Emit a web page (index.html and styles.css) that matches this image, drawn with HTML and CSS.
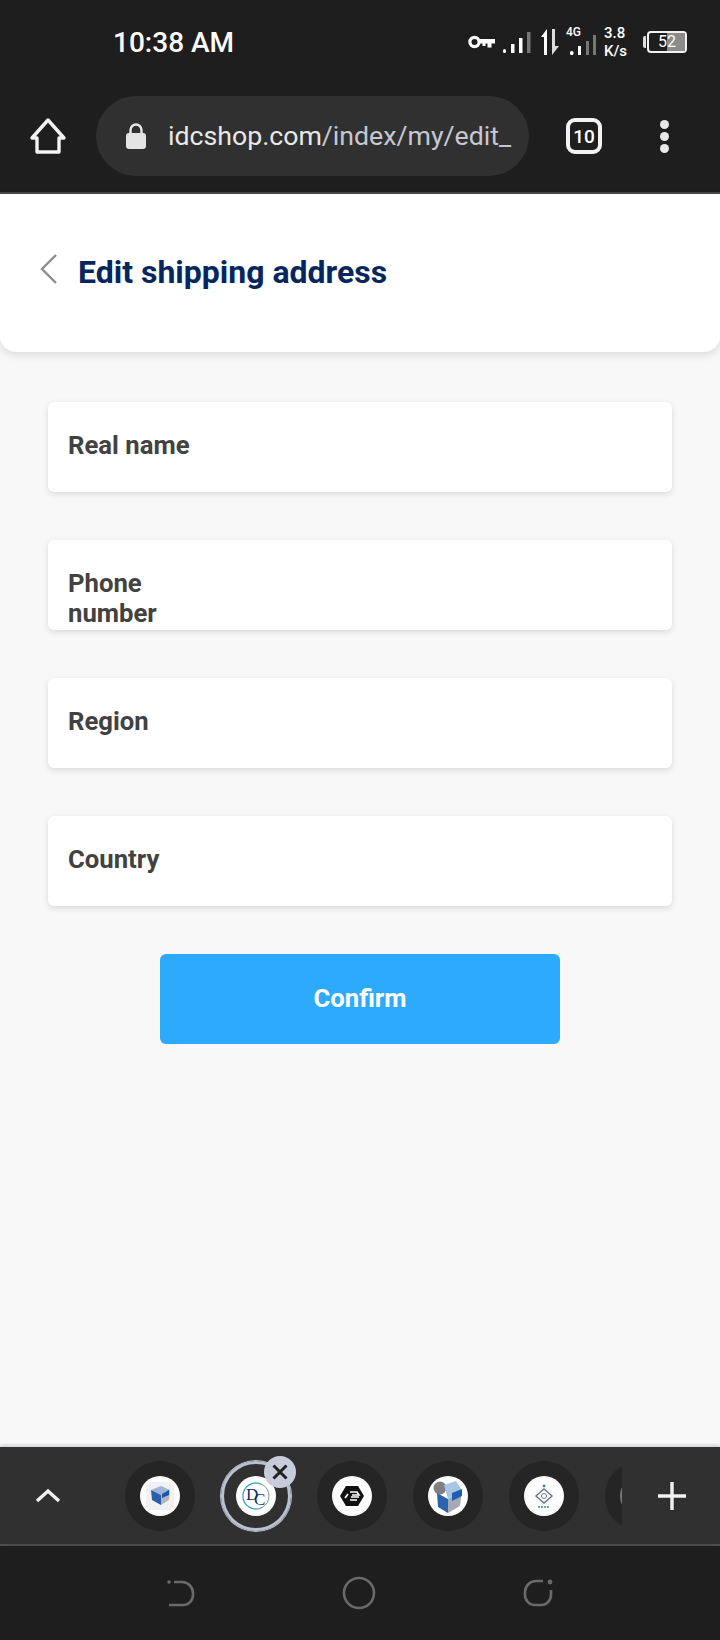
FILE: index.html
```html
<!DOCTYPE html>
<html lang="en">
<head>
<meta charset="utf-8">
<title>Edit shipping address</title>
<link rel="stylesheet" href="styles.css">
</head>
<body>
<div class="phone">
  <div class="status">
    <span class="time">10:38 AM</span>
    <div class="sys">
      <svg class="i-key" width="27" height="14" viewBox="0 0 27 14"><circle cx="6.5" cy="7" r="4.6" fill="none" stroke="#fff" stroke-width="3.2"/><path d="M11 4h16v4.500h-3.500v4h-4v-4h-2v2.500h-3v-2.500h-3.500z" fill="#fff"/></svg>
      <svg class="i-sig" width="29" height="26" viewBox="0 0 29 26"><rect x="1" y="20" width="3" height="4" rx="1.5" fill="#fff"/><rect x="9" y="15" width="3.500" height="9" fill="#fff"/><rect x="17" y="9" width="3.500" height="15" fill="#fff"/><rect x="25" y="3" width="3.500" height="21" fill="#777"/></svg>
      <svg class="i-arrows" width="18" height="26" viewBox="0 0 18 26"><path d="M6 0v26H3V8H0z" fill="#fff"/><path d="M11 0h3v17h4l-7 9z" fill="#ddd"/></svg>
      <div class="net">
        <span class="net-g">4G</span>
        <svg width="31" height="26" viewBox="0 0 31 26" class="i-sig2"><rect x="4" y="18" width="3.500" height="4" rx="1.500" fill="#fff"/><rect x="12" y="13" width="3" height="9" fill="#fff"/><rect x="20" y="8" width="3" height="14" fill="#777"/><rect x="27" y="2" width="3" height="20" fill="#777"/></svg>
      </div>
      <div class="speed"><span>3.8</span><span>K/s</span></div>
      <div class="batt"><span class="batt-cap"></span><div class="batt-body"><span class="batt-fill"></span><span class="batt-num">52</span></div></div>
    </div>
  </div>
  <div class="toolbar">
    <svg class="i-home" width="38" height="38" viewBox="0 0 38 38"><path d="M19 3 35 21H30V35H8V21H3Z" fill="none" stroke="#f2f2f2" stroke-width="3.400" stroke-linejoin="round"/></svg>
    <div class="url">
      <svg class="i-lock" width="22" height="26" viewBox="0 0 22 26"><path d="M5.500 11V7a5.500 5.500 0 0 1 11 0v4" fill="none" stroke="#e8e8e8" stroke-width="2.400"/><rect x="1" y="10" width="20" height="16" rx="3" fill="#e4e4e4"/></svg>
      <span class="url-text"><span class="url-host">idcshop.com</span>/index/my/edit_</span>
    </div>
    <div class="tabs-count">10</div>
    <div class="more"><i></i><i></i><i></i></div>
  </div>
  <main class="page">
    <header class="head">
      <svg class="i-back" width="18" height="30" viewBox="0 0 18 30"><path d="M16 1 2 15l14 14" fill="none" stroke="#8c8c8c" stroke-width="2.400"/></svg>
      <h1 class="title">Edit shipping address</h1>
    </header>
    <form class="form">
      <div class="card"><div class="label">Real name</div></div>
      <div class="card"><div class="label">Phone number</div></div>
      <div class="card"><div class="label">Region</div></div>
      <div class="card"><div class="label">Country</div></div>
      <button class="confirm" type="button">Confirm</button>
    </form>
  </main>
  <div class="tabbar">
    <svg class="i-up" width="26" height="16" viewBox="0 0 26 16"><path d="M2 13 13 3l11 10" fill="none" stroke="#f0f0f0" stroke-width="3.400"/></svg>
    <div class="strip">
      <div class="tab"><span class="fav">
        <svg width="28" height="28" viewBox="0 0 28 28"><rect width="28" height="28" rx="5" fill="#f1f1f3"/><path d="M5 8 15 4l9 4-9 5z" fill="#9fb4d6"/><path d="M5 8l10 5v10L6 18z" fill="#2a5fb0"/><path d="M24 8l-9 5v10l8-5z" fill="#b4b6bc"/><path d="M16 12l7-4v5l-7 3z" fill="#1d55a8"/></svg>
      </span></div>
      <div class="tab tab-on"><span class="fav">
        <svg width="30" height="30" viewBox="0 0 30 30"><path d="M21 3.500A13 13 0 1 0 21 26.500" fill="none" stroke="#3f9bdc" stroke-width="1.300"/><path d="M21 3.500A13 13 0 0 1 21 26.500" fill="none" stroke="#8a8e96" stroke-width="1"/><text x="5" y="19" class="dc">D</text><text x="13" y="24" class="dc">C</text></svg>
      </span><span class="close"><svg width="16" height="16" viewBox="0 0 16 16"><path d="M1.500 1.500l13 13M14.500 1.500l-13 13" stroke="#222" stroke-width="3"/></svg></span></div>
      <div class="tab"><span class="fav">
        <svg width="24" height="20" viewBox="0 0 24 20"><path d="M6 0h12l6 10-6 10H6L0 10z" fill="#111"/><path d="M5 12l3-4M10 6h7l2 3h-7M11 11h8M10 14h7" fill="none" stroke="#fff" stroke-width="1.600"/></svg>
      </span></div>
      <div class="tab"><span class="fav">
        <svg width="40" height="40" viewBox="0 0 40 40"><circle cx="12" cy="12" r="6.500" fill="#7e8086"/><path d="M9 17l11 6v14L10 31z" fill="#2a63b0"/><path d="M34 14l-14 9v14l12-7z" fill="#a6aab4"/><path d="M16 9l12-4 6 9-14 9z" fill="#a8c6e4"/><path d="M24 17l10-4v7l-10 5z" fill="#1f5fb2"/></svg>
      </span></div>
      <div class="tab"><span class="fav">
        <svg width="24" height="26" viewBox="0 0 24 26"><path d="M12 6l8 7-8 7-8-7z" fill="none" stroke="#6d7690" stroke-width="1.500"/><circle cx="12" cy="13" r="2.500" fill="none" stroke="#6d7690"/><circle cx="12" cy="3" r="1.400" fill="#3b7fd0"/><path d="M6 24h12" stroke="#3b7fd0" stroke-width="1.600" stroke-dasharray="2 1"/></svg>
      </span></div>
      <div class="tab"><span class="fav fav-dim"></span></div>
    </div>
    <svg class="i-plus" width="28" height="28" viewBox="0 0 28 28"><path d="M14 0v28M0 14h28" stroke="#f2f2f2" stroke-width="3.400"/></svg>
  </div>
  <nav class="nav">
    <svg width="30" height="30" viewBox="0 0 30 30"><circle cx="3" cy="4" r="1.800" fill="#6a6a6a"/><path d="M8 4h8a11 11 0 0 1 11 11v2a10 10 0 0 1-10 10H3" fill="none" stroke="#6a6a6a" stroke-width="2.600"/></svg>
    <svg width="34" height="34" viewBox="0 0 34 34"><circle cx="17" cy="17" r="15" fill="none" stroke="#6a6a6a" stroke-width="2.600"/></svg>
    <svg width="32" height="30" viewBox="0 0 32 30"><path d="M21 3h-7A11 11 0 0 0 3 14v3a10 10 0 0 0 10 10h6a10 10 0 0 0 10-10v-5" fill="none" stroke="#6a6a6a" stroke-width="2.600"/><circle cx="28" cy="4" r="2.400" fill="#6a6a6a"/></svg>
  </nav>
</div>
</body>
</html>
```
FILE: styles.css
```css
* { box-sizing: border-box; }
html, body { margin: 0; padding: 0; }
body { font-family: Roboto, "Liberation Sans", sans-serif; background: #1e1e1e; }
.phone { width: 720px; height: 1640px; display: flex; flex-direction: column; overflow: hidden; }

.status { height: 84px; padding: 0 33px 0 113px; background: #1e1e1e; display: flex; align-items: center; justify-content: space-between; flex: none; }
.time { color: #fff; font-size: 28px; font-weight: 500; }
.sys { display: flex; align-items: center; color: #fff; }
.i-key { margin-right: 7px; }
.i-sig { margin-right: 10px; }
.i-arrows { margin-right: 7px; }
.net { position: relative; width: 31px; height: 34px; margin-right: 7px; }
.net-g { position: absolute; left: 0; top: 0; font-size: 12px; font-weight: 500; line-height: 14px; }
.i-sig2 { position: absolute; left: 0; top: 8px; }
.speed { display: flex; flex-direction: column; font-size: 15px; font-weight: 500; line-height: 18px; width: 28px; margin-right: 11px; }
.batt { display: flex; align-items: center; }
.batt-cap { width: 3px; height: 12px; background: #ddd; border-radius: 2px 0 0 2px; margin-right: 1px; }
.batt-body { position: relative; width: 40px; height: 22px; border: 2px solid #f2f2f2; border-radius: 4px; display: flex; align-items: center; justify-content: center; }
.batt-fill { position: absolute; right: 0; top: 0; bottom: 0; width: 18px; background: #8b8b8b; }
.batt-num { position: relative; color: #fff; font-size: 16px; line-height: 18px; }

.toolbar { height: 110px; padding: 12px 0 16px 29px; background: #1e1e1e; border-bottom: 2px solid #484848; display: flex; align-items: center; flex: none; }
.i-home { flex: none; margin-right: 29px; }
.url { width: 433px; height: 80px; border-radius: 40px; background: #303030; display: flex; align-items: center; padding-left: 29px; flex: none; }
.i-lock { flex: none; margin-right: 21px; }
.url-text { color: #c5c8d2; font-size: 26.7px; white-space: nowrap; }
.url-host { color: #e8e8e8; }
.tabs-count { width: 36px; height: 36px; margin-left: 37px; border: 4px solid #f2f2f2; border-radius: 9px; color: #fff; font-size: 19px; font-weight: 500; display: flex; align-items: center; justify-content: center; flex: none; }
.more { display: flex; flex-direction: column; gap: 3px; margin-left: 58px; }
.more i { width: 9px; height: 9px; background: #e8e8e8; border-radius: 50%; display: block; }

.page { flex: 1; min-height: 0; background: #f8f8f8; }
.head { height: 158px; background: #fff; border-radius: 0 0 16px 16px; box-shadow: 0 3px 8px rgba(0,0,0,.12); display: flex; align-items: flex-start; padding: 60px 0 0 40px; }
.i-back { flex: none; margin-right: 20px; }
.title { margin: 0; font-size: 32px; line-height: 36px; font-weight: 700; color: #06265f; }
.form { padding: 50px 48px 0; display: flex; flex-direction: column; align-items: center; gap: 47px; }
.card { width: 624px; height: 90px; margin-bottom: 1px; background: #fff; border-radius: 6px; box-shadow: 0 2px 6px rgba(0,0,0,.13); padding: 28px 0 0 20px; }
.label { width: 130px; font-size: 25.7px; line-height: 30px; font-weight: 700; color: #424242; }
.confirm { width: 400px; height: 90px; border: 0; border-radius: 6px; background: #2daafb; color: #fff; font-family: inherit; font-size: 25.7px; font-weight: 700; padding: 0 0 2px; }

.tabbar { height: 99px; background: #303030; border-bottom: 2px solid #4a4a4a; box-shadow: 0 -2px 3px rgba(120,130,160,.3); position: relative; display: flex; align-items: center; flex: none; padding-left: 35px; }
.i-up { flex: none; margin-right: 64px; }
.strip { width: 497px; height: 97px; display: flex; align-items: center; gap: 26px; overflow: hidden; flex: none; }
.tab { width: 70px; height: 70px; flex: none; border-radius: 50%; background: #252525; display: flex; align-items: center; justify-content: center; position: relative; }
.fav { width: 40px; height: 40px; border-radius: 50%; background: #fff; display: flex; align-items: center; justify-content: center; overflow: hidden; flex: none; }
.fav-dim { background: #777; }
.tab-on { background: transparent; border: 3px solid #b9c0cf; box-shadow: 0 0 0 1px #b9c0cf; }
.close { position: absolute; right: -8px; top: -8px; width: 32px; height: 32px; border-radius: 50%; background: #c6ccda; display: flex; align-items: center; justify-content: center; }
.dc { font-family: "Liberation Serif", serif; font-size: 17px; fill: #0f2f66; }
.i-plus { flex: none; margin-left: 36px; }

.nav { height: 94px; background: #1e1e1e; display: flex; align-items: center; justify-content: center; flex: none; }
.nav svg { flex: none; margin: 0 73px; }
```
